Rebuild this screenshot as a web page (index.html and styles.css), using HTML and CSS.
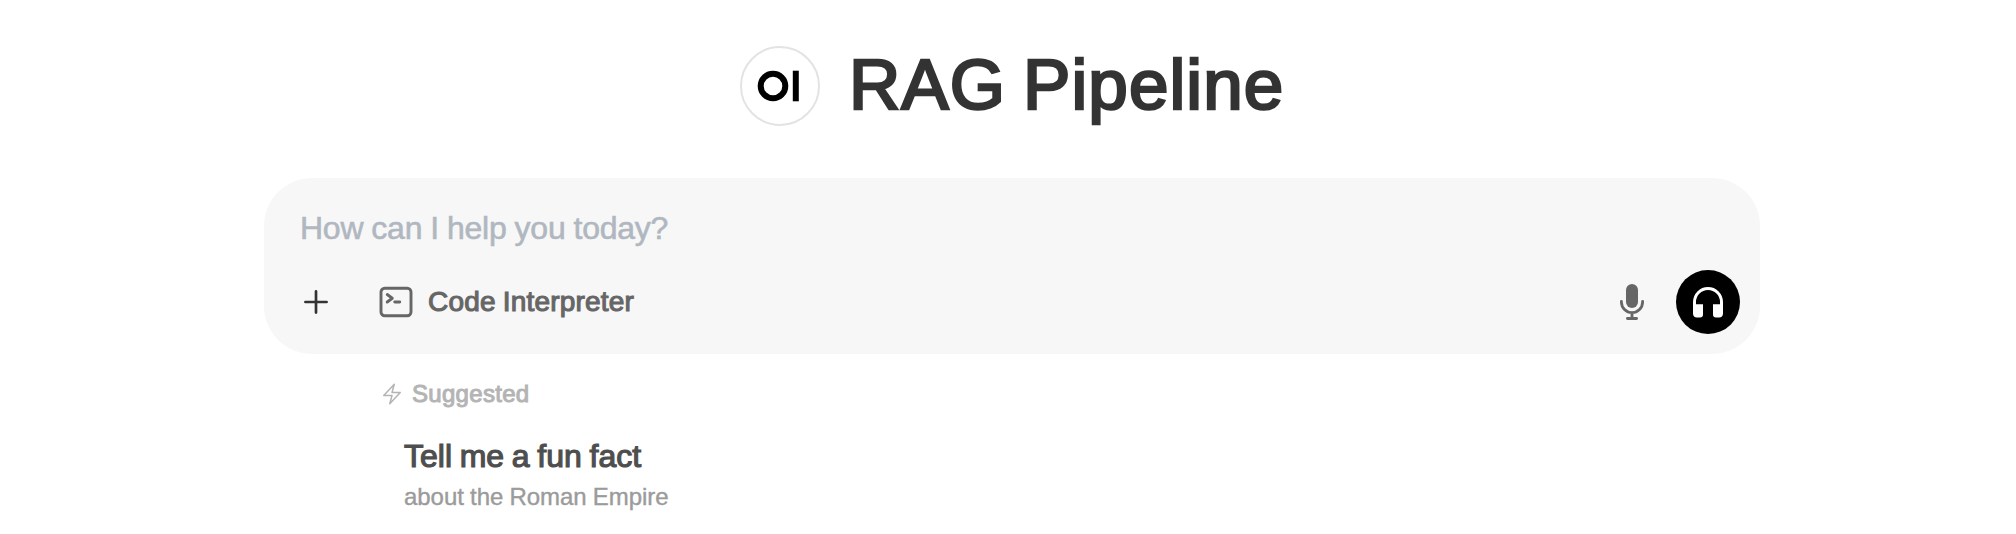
FILE: index.html
```html
<!DOCTYPE html>
<html lang="en">
<head>
<meta charset="utf-8">
<title>RAG Pipeline</title>
<link rel="stylesheet" href="styles.css">
</head>
<body>
<main class="page">
  <header class="hero">
    <div class="logo">
      <svg width="80" height="80" viewBox="0 0 80 80" fill="none">
        <circle cx="40" cy="40" r="39" stroke="#e3e3e3" stroke-width="2"/>
        <circle cx="33" cy="40" r="12.3" stroke="#000" stroke-width="6"/>
        <path d="M52.8 24.7h6v30.6h-6z" fill="#000"/>
      </svg>
    </div>
    <h1 class="title">RAG Pipeline</h1>
  </header>

  <section class="composer">
    <div class="prompt">How can I help you today?</div>
    <div class="toolbar">
      <button class="icon-button" aria-label="More">
        <svg width="24" height="24" viewBox="0 0 24 24" fill="none" stroke="#333" stroke-width="2.7" stroke-linecap="round"><path d="M12 1.4v21.2M1.4 12h21.2"/></svg>
      </button>
      <button class="tool">
        <svg width="40" height="40" viewBox="0 0 24 24" fill="none" stroke="currentColor" stroke-width="1.75" stroke-linecap="round" stroke-linejoin="round"><path d="m6.75 7.5 3 2.25-3 2.25m4.5 0h3m-9 8.25h13.5A2.25 2.25 0 0 0 21 18V6a2.25 2.25 0 0 0-2.25-2.25H5.25A2.25 2.25 0 0 0 3 6v12a2.25 2.25 0 0 0 2.25 2.25Z"/></svg>
        <span class="tool-label">Code Interpreter</span>
      </button>
      <button class="icon-button mic" aria-label="Dictate">
        <svg width="24" height="36" viewBox="0 0 24 36" fill="none" stroke="#666" stroke-width="2.8" stroke-linecap="round"><rect x="6" y="0" width="12" height="24" rx="6" fill="#666" stroke="none"/><path d="M1.4 17.3v.7a10.6 10.6 0 0 0 21.2 0v-.7M12 29v5.5M7.4 34.5h9.2"/></svg>
      </button>
      <button class="voice" aria-label="Voice mode">
        <svg width="30" height="31" viewBox="0 0 30 31"><path fill="#fff" d="M15 0A15 15 0 0 0 0 15v11.5A4 4 0 0 0 4 30.4h3a3 3 0 0 0 3-3V17.2H3V15a12 12 0 0 1 24 0v2.2h-7v10.2a3 3 0 0 0 3 3h3a4 4 0 0 0 4-3.9V15A15 15 0 0 0 15 0Z"/></svg>
      </button>
    </div>
  </section>

  <section class="suggestions">
    <div class="suggested">
      <svg width="24" height="24" viewBox="0 0 24 24" fill="none" stroke="#b4b4b4" stroke-width="1.5" stroke-linejoin="round"><path d="m3.75 13.5 10.5-11.25L12 10.5h8.25L9.75 21.75 12 13.5H3.75Z"/></svg>
      <span>Suggested</span>
    </div>
    <div class="suggestion">
      <div class="suggestion-title">Tell me a fun fact</div>
      <div class="suggestion-text">about the Roman Empire</div>
    </div>
  </section>
</main>
</body>
</html>
```

FILE: styles.css
```css
* { box-sizing: border-box; }
body {
  margin: 0;
  background: #fff;
  font-family: "Liberation Sans", Arial, sans-serif;
  overflow: hidden;
}
button {
  border: 0;
  padding: 0;
  background: none;
  font: inherit;
}
svg { display: block; flex: none; }
.page {
  width: 1496px;
  margin-left: 264px;
  padding-top: 46px;
}
.hero {
  display: flex;
  align-items: center;
  height: 80px;
  padding-left: 476px;
  gap: 29px;
}
.title {
  margin: 0;
  padding-bottom: 3px;
  color: #333;
  font-size: 71px;
  line-height: 77px;
  font-weight: 400;
  letter-spacing: 1.1px;
  word-spacing: -4px;
  white-space: nowrap;
  -webkit-text-stroke: 2.6px #333;
}
.composer {
  height: 176px;
  margin-top: 52px;
  padding: 30px 20px 20px 36px;
  border-radius: 48px;
  background: #f7f7f7;
}
.prompt {
  height: 40px;
  color: #b0b7c0;
  font-size: 32px;
  line-height: 40px;
  letter-spacing: -0.24px;
  word-spacing: -0.6px;
  -webkit-text-stroke: 0.6px #b0b7c0;
}
.toolbar {
  display: flex;
  align-items: center;
  height: 64px;
  margin-top: 22px;
}
.icon-button { padding: 4px; }
.tool {
  display: flex;
  align-items: center;
  gap: 12px;
  margin-left: 44px;
  color: #666;
}
.tool-label {
  font-size: 28px;
  line-height: 40px;
  letter-spacing: 0.2px;
  word-spacing: -1px;
  -webkit-text-stroke: 1.1px #666;
}
.mic { margin-left: auto; }
.voice {
  display: flex;
  align-items: center;
  justify-content: center;
  width: 64px;
  height: 64px;
  margin-left: 28px;
  border-radius: 50%;
  background: #000;
}
.suggestions { padding: 24px 0 0 116px; }
.suggested {
  display: flex;
  align-items: center;
  gap: 8px;
  height: 32px;
  color: #b4b4b4;
  font-size: 24px;
  line-height: 32px;
  letter-spacing: 0.3px;
  -webkit-text-stroke: 1px #b4b4b4;
}
.suggestion { padding: 26px 0 0 24px; }
.suggestion-title {
  color: #4e4e4e;
  font-size: 32px;
  line-height: 40px;
  letter-spacing: 0;
  word-spacing: -1.2px;
  -webkit-text-stroke: 1.2px #4e4e4e;
}
.suggestion-text {
  margin-top: 5px;
  color: #9b9b9b;
  font-size: 24px;
  line-height: 32px;
  letter-spacing: -0.05px;
  word-spacing: -0.4px;
  -webkit-text-stroke: 0.4px #9b9b9b;
}
```
